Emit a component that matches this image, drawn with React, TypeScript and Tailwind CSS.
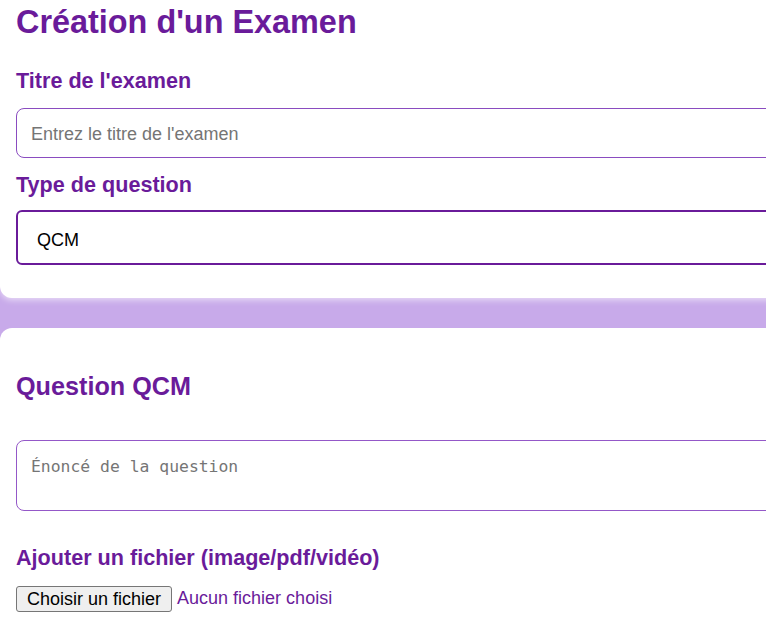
export default function App() {
  return (
    <div className="w-[766px] h-[628px] overflow-hidden bg-[#c8aaea] font-['Liberation_Sans',Arial,sans-serif]">
      {/* Exam card */}
      <section className="w-[960px] bg-white rounded-b-xl shadow-[0_2px_6px_rgba(255,255,255,0.6)] pl-4 pt-1 pb-[33px]">
        <h1 className="text-[32.4px] leading-[37px] font-bold text-[#6a1b9a]">Création d'un Examen</h1>
        <label className="block mt-[28px] text-[21.6px] leading-[23px] font-bold text-[#6a1b9a]">Titre de l'examen</label>
        <input
          type="text"
          placeholder="Entrez le titre de l'examen"
          className="mt-[16px] block w-full h-[50px] px-[14px] pt-[2px] border border-[#8a4cc0] rounded-lg text-[18px] text-black placeholder:text-[#757575] outline-none"
        />
        <label className="block mt-[15px] text-[21.6px] leading-[23px] font-bold text-[#6a1b9a]">Type de question</label>
        <div className="mt-[14px] h-[55px] flex items-center pl-[19px] pt-[5px] border-2 border-[#6a1b9a] rounded-md text-[18px] text-black">
          QCM
        </div>
      </section>

      <div className="h-[30px]" />

      {/* Question card */}
      <section className="w-[960px] h-[400px] bg-white rounded-t-xl pl-4 pt-[44px]">
        <h2 className="text-[25.2px] leading-[28px] font-bold text-[#6a1b9a]">Question QCM</h2>
        <textarea
          placeholder="Énoncé de la question"
          className="mt-[40px] block w-full h-[71px] px-[14px] pt-[16px] pb-[14px] border border-[#9458c8] rounded-lg resize-none font-['DejaVu_Sans_Mono',monospace] text-[16.4px] leading-[19px] placeholder:text-[#757575] outline-none"
        />
        <label className="block mt-[35px] text-[21.6px] leading-[23px] font-bold text-[#6a1b9a]">
          Ajouter un fichier (image/pdf/vidéo)
        </label>
        <div className="mt-[16px] flex items-center gap-[5px]">
          <button className="h-[26px] px-[10px] bg-[#efefef] border border-[#767676] rounded-[3px] text-[18px] leading-[20px] text-black">
            Choisir un fichier
          </button>
          <span className="text-[18px] text-[#6a1b9a]">Aucun fichier choisi</span>
        </div>
      </section>
    </div>
  )
}
